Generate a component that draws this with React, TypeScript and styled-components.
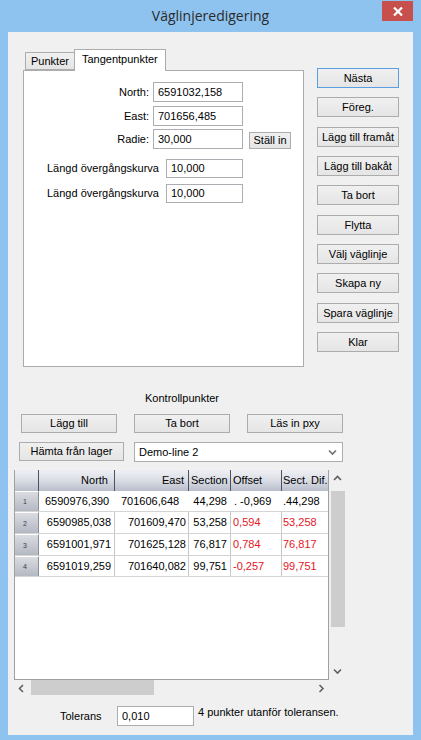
import React from 'react';
import styled, { createGlobalStyle } from 'styled-components';

const GlobalStyle = createGlobalStyle`
  html, body {
    margin: 0;
    padding: 0;
    background: #8ec3f0;
  }
  body {
    font-family: "Liberation Sans", Arial, sans-serif;
    font-size: 11px;
    line-height: 13px;
    color: #000;
  }
`;

type Align = 'left' | 'right';

interface ICol {
  title: string;
  width: number;
  headAlign: Align;
  headPad: number;
}

interface ICell {
  text: string;
  align: Align;
  pad: number;
  red?: boolean;
}

interface IRow {
  n: number;
  h: number;
  editing?: boolean;
  cells: ICell[];
}

const COLUMNS: ICol[] = [
  { title: 'North', width: 76, headAlign: 'right', headPad: 6 },
  { title: 'East', width: 74, headAlign: 'right', headPad: 4 },
  { title: 'Section', width: 42, headAlign: 'left', headPad: 2 },
  { title: 'Offset', width: 51, headAlign: 'left', headPad: 2 },
  { title: 'Sect. Dif.', width: 46, headAlign: 'left', headPad: 1 },
];

const plainRow = (n: number, h: number, north: string, east: string, sec: string, off: string): IRow => ({
  n,
  h,
  cells: [
    { text: north, align: 'right', pad: 3 },
    { text: east, align: 'right', pad: 2 },
    { text: sec, align: 'right', pad: 3 },
    { text: off, align: 'left', pad: 2, red: true },
    { text: sec, align: 'left', pad: 1, red: true },
  ],
});

const ROWS: IRow[] = [
  {
    n: 1,
    h: 21,
    editing: true,
    cells: [
      { text: '6590976,390', align: 'left', pad: 6 },
      { text: '701606,648', align: 'left', pad: 6 },
      { text: '44,298', align: 'right', pad: 3 },
      { text: '. -0,969', align: 'left', pad: 3 },
      { text: '.44,298', align: 'left', pad: 1 },
    ],
  },
  plainRow(2, 22, '6590985,038', '701609,470', '53,258', '0,594'),
  plainRow(3, 22, '6591001,971', '701625,128', '76,817', '0,784'),
  plainRow(4, 21, '6591019,259', '701640,082', '99,751', '-0,257'),
];

const SIDE_BUTTONS = [
  'Nästa',
  'Föreg.',
  'Lägg till framåt',
  'Lägg till bakåt',
  'Ta bort',
  'Flytta',
  'Välj väglinje',
  'Skapa ny',
  'Spara väglinje',
  'Klar',
];

// buttons sit on a ~29.3px pitch in the original dialog
const SIDE_PITCH = 29.33;
const SIDE_HEIGHT = 20;
const sideGap = (i: number) =>
  i === 0 ? 0 : Math.round(i * SIDE_PITCH) - Math.round((i - 1) * SIDE_PITCH) - SIDE_HEIGHT;

const Chevron: React.FC<{ dir: 'up' | 'down' | 'left' | 'right'; color?: string }> = ({ dir, color = '#606060' }) => {
  const points = {
    up: '1,5 4.5,1.5 8,5',
    down: '1,1.5 4.5,5 8,1.5',
    left: '5,1 1.5,4.5 5,8',
    right: '1.5,1 5,4.5 1.5,8',
  }[dir];
  const vertical = dir === 'up' || dir === 'down';
  return (
    <svg width={vertical ? 9 : 7} height={vertical ? 7 : 9} viewBox={vertical ? '0 0 9 7' : '0 0 7 9'}>
      <polyline points={points} fill="none" stroke={color} strokeWidth={1.6} />
    </svg>
  );
};

export default function App() {
  return (
    <>
      <GlobalStyle />
      <Window>
        <TitleBar>
          <Title>Väglinjeredigering</Title>
          <CloseButton>
            <svg width="10" height="9" viewBox="0 0 10 9">
              <path d="M1 0.5 L9 8.5 M9 0.5 L1 8.5" stroke="#fff" strokeWidth={2.2} />
            </svg>
          </CloseButton>
        </TitleBar>
        <Client>
          <TopSection>
            <TabControl>
              <TabStrip>
                <Tab>Punkter</Tab>
                <Tab $active>Tangentpunkter</Tab>
              </TabStrip>
              <TabPanel>
                <FormRow>
                  <FieldLabel $width={125}>North:</FieldLabel>
                  <TextBox $width={90}>6591032,158</TextBox>
                </FormRow>
                <FormRow $top={4}>
                  <FieldLabel $width={125}>East:</FieldLabel>
                  <TextBox $width={90}>701656,485</TextBox>
                </FormRow>
                <FormRow $top={3}>
                  <FieldLabel $width={125}>Radie:</FieldLabel>
                  <TextBox $width={90}>30,000</TextBox>
                  <SmallButton>Ställ in</SmallButton>
                </FormRow>
                <FormRow $top={10} $indent={23}>
                  <FieldLabel $width={115} $align="left" $lh={19}>
                    Längd övergångskurva
                  </FieldLabel>
                  <TextBox $width={77} $height={19}>
                    10,000
                  </TextBox>
                </FormRow>
                <FormRow $top={6} $indent={23}>
                  <FieldLabel $width={115} $align="left" $lh={19}>
                    Längd övergångskurva
                  </FieldLabel>
                  <TextBox $width={77} $height={19}>
                    10,000
                  </TextBox>
                </FormRow>
              </TabPanel>
            </TabControl>
            <SideButtons>
              {SIDE_BUTTONS.map((label, i) => (
                <PushButton key={label} $default={i === 0} $width={82} $height={SIDE_HEIGHT} $top={sideGap(i)}>
                  {label}
                </PushButton>
              ))}
            </SideButtons>
          </TopSection>

          <LowerSection>
            <SectionCaption>Kontrollpunkter</SectionCaption>
            <ButtonRow>
              <PushButton $width={96}>Lägg till</PushButton>
              <PushButton $width={96}>Ta bort</PushButton>
              <PushButton $width={96}>Läs in pxy</PushButton>
            </ButtonRow>
            <LayerRow>
              <PushButton $width={105}>Hämta från lager</PushButton>
              <ComboBox>
                <ComboText>Demo-line 2</ComboText>
                <Chevron dir="down" color="#707070" />
              </ComboBox>
            </LayerRow>

            <GridFrame>
              <GridBody>
                <HeaderRow>
                  <CornerCell />
                  {COLUMNS.map((c) => (
                    <HeaderCell key={c.title} $width={c.width} $align={c.headAlign} $pad={c.headPad}>
                      {c.title}
                    </HeaderCell>
                  ))}
                </HeaderRow>
                {ROWS.map((row) => (
                  <DataRow key={row.n} $h={row.h}>
                    <RowHeader>{row.n}</RowHeader>
                    {row.cells.map((cell, i) => (
                      <DataCell
                        key={i}
                        $width={COLUMNS[i].width}
                        $align={cell.align}
                        $pad={cell.pad}
                        $red={cell.red}
                        $lined={!row.editing}
                      >
                        {cell.text}
                      </DataCell>
                    ))}
                  </DataRow>
                ))}
              </GridBody>
              <VScroll>
                <ArrowBox>
                  <Chevron dir="up" />
                </ArrowBox>
                <VTrack>
                  <VThumb />
                </VTrack>
                <ArrowBox>
                  <Chevron dir="down" />
                </ArrowBox>
              </VScroll>
              <HScroll>
                <ArrowBox $horizontal>
                  <Chevron dir="left" />
                </ArrowBox>
                <HTrack>
                  <HThumb />
                </HTrack>
                <ArrowBox $horizontal>
                  <Chevron dir="right" />
                </ArrowBox>
              </HScroll>
              <div />
            </GridFrame>

            <ToleranceRow>
              <ToleranceLabel>Tolerans</ToleranceLabel>
              <TextBox $width={77}>0,010</TextBox>
              <StatusText>4 punkter utanför toleransen.</StatusText>
            </ToleranceRow>
          </LowerSection>
        </Client>
      </Window>
    </>
  );
}

const Window = styled.div`
  width: 421px;
  height: 740px;
  box-sizing: border-box;
  background: #8ec3f0;
  padding: 0 8px 5px;
  display: flex;
  flex-direction: column;
`;

const TitleBar = styled.div`
  position: relative;
  height: 32px;
  display: flex;
  align-items: center;
  justify-content: center;
`;

const Title = styled.span`
  font-family: "Open Sans", "Noto Sans", sans-serif;
  font-size: 14px;
  line-height: 20px;
  color: #2a2a2a;
  margin-top: -1px;
`;

const CloseButton = styled.div`
  position: absolute;
  top: 1px;
  right: 0;
  width: 31px;
  height: 20px;
  background: #c7504c;
  display: flex;
  align-items: center;
  justify-content: center;
`;

const Client = styled.div`
  flex: 1;
  background: #f0f0f0;
  display: flex;
  flex-direction: column;
`;

const TopSection = styled.div`
  display: flex;
  align-items: flex-start;
  padding: 17px 0 0 15px;
`;

const TabControl = styled.div`
  width: 281px;
  display: flex;
  flex-direction: column;
`;

const TabStrip = styled.div`
  height: 22px;
  margin-bottom: -1px;
  padding-left: 2px;
  display: flex;
  align-items: flex-end;
  position: relative;
  z-index: 1;
`;

const Tab = styled.div<{ $active?: boolean }>`
  box-sizing: border-box;
  height: ${(p) => (p.$active ? 22 : 18)}px;
  margin-bottom: ${(p) => (p.$active ? 0 : 1)}px;
  padding: ${(p) => (p.$active ? '3px 7px 0' : '2px 5px 0')};
  margin-left: ${(p) => (p.$active ? -1 : 0)}px;
  border: 1px solid #acacac;
  border-bottom: ${(p) => (p.$active ? 'none' : '1px solid #acacac')};
  background: ${(p) => (p.$active ? '#fff' : 'linear-gradient(#f0f0f0, #e5e5e5)')};
`;

const TabPanel = styled.div`
  box-sizing: border-box;
  height: 297px;
  border: 1px solid #acacac;
  background: #fff;
  padding-top: 11px;
  display: flex;
  flex-direction: column;
`;

const FormRow = styled.div<{ $top?: number; $indent?: number }>`
  display: flex;
  align-items: flex-end;
  margin-top: ${(p) => p.$top ?? 0}px;
  padding-left: ${(p) => p.$indent ?? 0}px;
`;

const FieldLabel = styled.div<{ $width: number; $align?: Align; $lh?: number }>`
  width: ${(p) => p.$width}px;
  text-align: ${(p) => p.$align ?? 'right'};
  line-height: ${(p) => p.$lh ?? 20}px;
  margin-right: 4px;
  align-self: flex-start;
  white-space: nowrap;
`;

const TextBox = styled.div<{ $width: number; $height?: number }>`
  box-sizing: border-box;
  width: ${(p) => p.$width}px;
  height: ${(p) => p.$height ?? 20}px;
  line-height: ${(p) => (p.$height ?? 20) - 2}px;
  border: 1px solid #abadb3;
  background: #fff;
  padding-left: 4px;
  white-space: nowrap;
`;

const ButtonBase = styled.div`
  box-sizing: border-box;
  border: 1px solid #acacac;
  background: linear-gradient(#f0f0f0, #e5e5e5);
  text-align: center;
  white-space: nowrap;
`;

const SmallButton = styled(ButtonBase)`
  width: 42px;
  height: 17px;
  line-height: 15px;
  margin-left: 6px;
`;

const PushButton = styled(ButtonBase)<{ $width: number; $height?: number; $default?: boolean; $top?: number }>`
  width: ${(p) => p.$width}px;
  height: ${(p) => p.$height ?? 19}px;
  line-height: ${(p) => (p.$height ?? 19) - 2}px;
  margin-top: ${(p) => p.$top ?? 0}px;
  border-color: ${(p) => (p.$default ? '#5a9ee3' : '#acacac')};
`;

const SideButtons = styled.div`
  margin: 19px 0 0 13px;
  display: flex;
  flex-direction: column;
`;

const LowerSection = styled.div`
  width: 322px;
  padding-left: 13px;
  display: flex;
  flex-direction: column;
`;

const SectionCaption = styled.div`
  margin-top: 25px;
  text-align: center;
`;

const ButtonRow = styled.div`
  margin-top: 9px;
  display: flex;
  justify-content: space-between;
`;

const LayerRow = styled.div`
  margin: 9px 0 0 -2px;
  display: flex;
  align-items: flex-start;
  gap: 10px;
`;

const ComboBox = styled.div`
  box-sizing: border-box;
  width: 209px;
  height: 20px;
  border: 1px solid #abadb3;
  background: #fff;
  padding: 0 5px 0 4px;
  display: flex;
  align-items: center;
  justify-content: space-between;
`;

const ComboText = styled.span`
  line-height: 18px;
`;

const GridFrame = styled.div`
  margin: 8px 0 0 -7px;
  display: grid;
  grid-template-columns: 315px 17px;
  grid-template-rows: 210px 17px;
`;

const GridBody = styled.div`
  box-sizing: border-box;
  border: 1px solid #a0a0a0;
  border-top: none;
  background: #fff;
  overflow: hidden;
`;

const HeaderRow = styled.div`
  display: flex;
  height: 21px;
  line-height: 21px;
`;

const headGradient = 'linear-gradient(#eef0f4 0%, #dcdfe6 45%, #b9becb 100%)';

const CornerCell = styled.div`
  width: 24px;
  box-sizing: border-box;
  background: ${headGradient};
  border-right: 1px solid #4a5161;
`;

const HeaderCell = styled.div<{ $width: number; $align: Align; $pad: number }>`
  box-sizing: border-box;
  width: ${(p) => p.$width}px;
  background: ${headGradient};
  border-right: 1px solid #4a5161;
  text-align: ${(p) => p.$align};
  padding: 0 ${(p) => p.$pad}px;
  white-space: nowrap;
  overflow: hidden;

  &:last-child {
    border-right: none;
  }
`;

const DataRow = styled.div<{ $h: number }>`
  display: flex;
  height: ${(p) => p.$h}px;
  line-height: ${(p) => p.$h - 1}px;
  box-sizing: border-box;
  border-bottom: 1px solid #d4d4d4;
`;

const RowHeader = styled.div`
  width: 24px;
  flex-shrink: 0;
  box-sizing: border-box;
  background: linear-gradient(#dadce1, #b4b8c2);
  border-top: 1px solid #fff;
  border-right: 1px solid #8a8f9a;
  text-align: center;
  padding-right: 3px;
  font-size: 7px;
  color: #3c3c46;
`;

const DataCell = styled.div<{ $width: number; $align: Align; $pad: number; $red?: boolean; $lined: boolean }>`
  box-sizing: border-box;
  width: ${(p) => p.$width}px;
  flex-shrink: 0;
  text-align: ${(p) => p.$align};
  padding: 0 ${(p) => p.$pad}px;
  color: ${(p) => (p.$red ? '#e5151e' : '#000')};
  border-right: 1px solid ${(p) => (p.$lined ? '#c8c8c8' : 'transparent')};
  white-space: nowrap;
  overflow: hidden;

  &:last-child {
    border-right: none;
  }
`;

const VScroll = styled.div`
  display: flex;
  flex-direction: column;
  align-items: stretch;
`;

const ArrowBox = styled.div<{ $horizontal?: boolean }>`
  flex: 0 0 ${(p) => (p.$horizontal ? 15 : 17)}px;
  display: flex;
  align-items: center;
  justify-content: center;
`;

const VTrack = styled.div`
  flex: 1;
  display: flex;
  flex-direction: column;
  padding: 4px 1px 0 2px;
`;

const VThumb = styled.div`
  height: 136px;
  background: #cdcdcd;
`;

const HScroll = styled.div`
  display: flex;
  align-items: stretch;
`;

const HTrack = styled.div`
  flex: 1;
  display: flex;
  padding: 0 0 2px 2px;
`;

const HThumb = styled.div`
  width: 123px;
  background: #cdcdcd;
`;

const ToleranceRow = styled.div`
  margin-top: 9px;
  display: flex;
  align-items: flex-start;
`;

const ToleranceLabel = styled.div`
  margin: 4px 5px 0 39px;
  width: 52px;
`;

const StatusText = styled.div`
  margin-left: 4px;
  white-space: nowrap;
`;
